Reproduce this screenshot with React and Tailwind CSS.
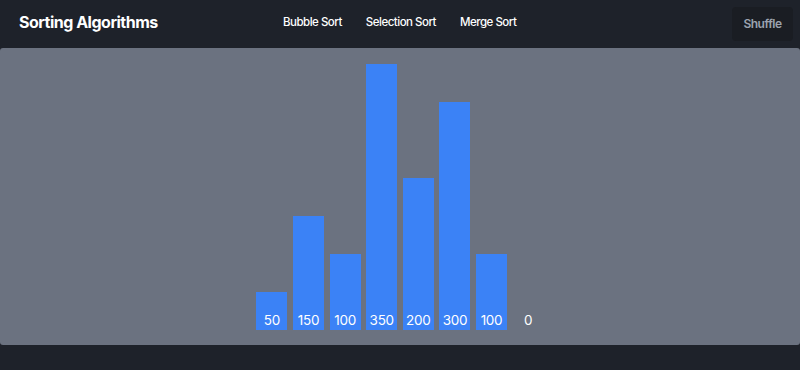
import React from "react";

const values = [50, 150, 100, 350, 200, 300, 100, 0];

export default function App() {
  return (
    <div className="w-[800px] h-[370px] bg-[#1e222a] flex flex-col font-['Inter',sans-serif] overflow-hidden">
      {/* Header */}
      <header className="h-12 flex items-center px-[19px] pr-[7px] relative">
        <h1 className="text-white font-bold text-[16px] tracking-[-0.5px] pb-[4px]">Sorting Algorithms</h1>
        <nav className="absolute left-[283px] top-0 h-[46px] flex items-center gap-[24px] text-white text-[11.5px] font-medium tracking-[-0.5px]">
          <button>Bubble Sort</button>
          <button>Selection Sort</button>
          <button>Merge Sort</button>
        </nav>
        <button className="ml-auto h-[34px] w-[61px] mb-[0px] rounded bg-[#1a1d23] text-[#9ca3af] text-[12px] font-semibold tracking-[-0.5px]">
          Shuffle
        </button>
      </header>

      {/* Bars panel */}
      <div className="h-[297px] bg-[#6b7280] rounded-[3px] flex items-end justify-center gap-[5.6px] pb-[15px]">
        {values.map((v, i) => (
          <div
            key={i}
            className={`w-[31px] flex items-end justify-center ${v > 0 ? "bg-[#3b82f6]" : ""}`}
            style={{ height: v * 0.76 }}
          >
            <span className="text-white text-[13.5px] leading-none pb-[3px] whitespace-nowrap tracking-[-0.3px]">{v}</span>
          </div>
        ))}
      </div>
    </div>
  );
}
